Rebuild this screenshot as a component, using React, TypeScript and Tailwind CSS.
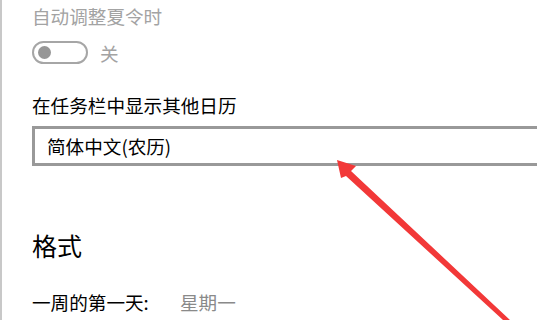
import React from "react";

const font = { fontFamily: '"Noto Sans CJK SC", "Microsoft YaHei", sans-serif' };

export default function App() {
  return (
    <div className="relative w-[537px] h-[320px] overflow-hidden bg-white" style={font}>
      <div className="flex h-full">
        <div className="w-[2px] h-full bg-[#c8c8c8]" />
        <div className="flex flex-col pl-[30px] pt-[2px] flex-1">
          <div className="text-[18.6px] leading-[28px] text-[#a3a3a3]">自动调整夏令时</div>
          <div className="flex items-center mt-[11px] h-[23px]">
            <div className="w-[56px] h-[23px] rounded-full border-2 border-[#a6a6a6] flex items-center pl-[4px]">
              <div className="w-[13px] h-[13px] rounded-full bg-[#969696]" />
            </div>
            <span className="ml-[12px] text-[18.6px] leading-[23px] text-[#a3a3a3]">关</span>
          </div>
          <div className="mt-[27px] text-[18.6px] leading-[28px] text-black">在任务栏中显示其他日历</div>
          <div className="mt-[7px] h-[40px] border-[3px] border-r-0 border-[#999999] flex items-center pl-[12px] text-[18.6px] text-black">
            简体中文(农历)
          </div>
          <div className="mt-[62px] text-[25px] leading-[34px] text-black">格式</div>
          <div className="mt-[26px] flex text-[18.6px] leading-[28px]">
            <span className="text-black w-[148px]">一周的第一天:</span>
            <span className="text-[#8a8a8a]">星期一</span>
          </div>
        </div>
      </div>
      <svg className="absolute left-0 top-0" width="537" height="320" viewBox="0 0 537 320">
        <polygon
          points="337,160 356,166 351,171 510,320 503,320 346,176 341,178"
          fill="#f23838"
        />
      </svg>
    </div>
  );
}
